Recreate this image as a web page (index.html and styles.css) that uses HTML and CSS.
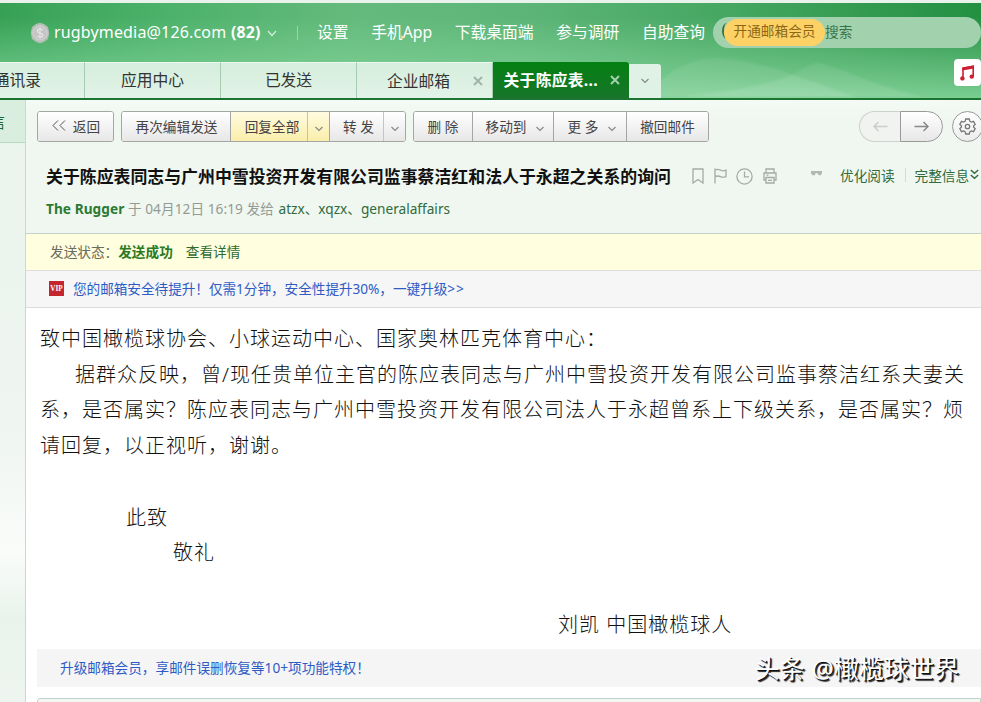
FILE: index.html
```html
<!DOCTYPE html>
<html lang="zh-CN">
<head>
  <meta charset="UTF-8">
  <title>126网易免费邮</title>
  <link rel="stylesheet" href="styles.css">
</head>
<body>

  <header class="header">
    <svg class="hills" width="351" height="48" viewBox="0 0 351 48">
      <defs>
        <linearGradient id="hill" x1="0" y1="0" x2="0" y2="1">
          <stop offset="0" stop-color="#fff" stop-opacity=".08"/>
          <stop offset="1" stop-color="#fff" stop-opacity=".12"/>
        </linearGradient>
      </defs>
      <path d="M0 48 L30 24 Q55 8 75 9 Q100 10 120 16 Q140 20 153 26 L215 48 Z" fill="url(#hill)"/>
      <path d="M40 48 Q120 40 152 26 L170 16 Q177 12 186 16 L205 22 Q225 32 282 48 Z" fill="url(#hill)"/>
    </svg>

    <div class="topbar">
      <svg class="coin" width="20" height="22" viewBox="0 0 20 22">
        <path d="M10 .8 L14 2 L18 5 L19.3 11 L18 17 L14 20 L10 21.2 L6 20 L2 17 L.7 11 L2 5 L6 2 Z" fill="#b3bfb4"/>
        <circle cx="10" cy="11" r="7.2" fill="#c5c5c5" stroke="#d8d6d6"/>
        <path d="M12.8 8.4 Q12 6.8 10 6.8 Q7.4 6.8 7.4 8.8 Q7.4 10.5 10 11 Q12.8 11.5 12.8 13.3 Q12.8 15.2 10 15.2 Q7.8 15.2 7.2 13.6 M10 5.5 V16.5" fill="none" stroke="#e6e3e4" stroke-width="1.2"/>
      </svg>
      <span class="account">rugbymedia@126.com</span>
      <b class="unread">(82)</b>
      <svg class="arrow-down" width="10" height="7" viewBox="0 0 10 7"><path d="M1 1 L5 5.5 L9 1"/></svg>
      <i class="split"></i>
      <nav class="nav">
        <a>设置</a>
        <a>手机App</a>
        <a>下载桌面端</a>
        <a>参与调研</a>
        <a>自助查询</a>
      </nav>
      <div class="search">
        <span class="lens"></span>
        <span class="vip-pill">开通邮箱会员</span>
        <span class="search-text">搜索</span>
      </div>
    </div>

    <div class="tabs">
      <div class="tab tab-first">通讯录</div>
      <div class="tab">应用中心</div>
      <div class="tab">已发送</div>
      <div class="tab tab-close">企业邮箱
        <svg width="10" height="10" viewBox="0 0 10 10"><path d="M1 1 L9 9 M9 1 L1 9"/></svg>
      </div>
      <div class="tab tab-close active">关于陈应表...
        <svg width="10" height="10" viewBox="0 0 10 10"><path d="M1 1 L9 9 M9 1 L1 9"/></svg>
      </div>
      <div class="tab-more">
        <svg class="arrow-down" width="8" height="6" viewBox="0 0 8 6"><path d="M.5 1 L4 4.5 L7.5 1"/></svg>
      </div>
    </div>

    <div class="music">
      <svg width="15" height="16" viewBox="0 0 15 16">
        <path d="M3 13 V3.2 L13.2 1.4 V11.2" fill="none" stroke="#cf1f30" stroke-width="1.6"/>
        <path d="M2.4 2.4 L14 .3 V3.4 L2.4 5.4 Z" fill="#cf1f30"/>
        <circle cx="2.4" cy="13.4" r="2.2" fill="#cf1f30"/>
        <circle cx="11.8" cy="11.6" r="2.2" fill="#cf1f30"/>
      </svg>
    </div>
  </header>

  <div class="main">
    <aside class="sidebar">
      <div class="side-top"><span>信</span></div>
    </aside>

    <section class="content">
      <div class="mail-head">
        <div class="toolbar">
          <div class="group">
            <span class="btn w-back"><svg class="back" width="14" height="11" viewBox="0 0 14 11"><path d="M6 .5 L1 5.5 L6 10.5 M13 .5 L8 5.5 L13 10.5"/></svg>返回</span>
          </div>
          <div class="group">
            <span class="btn w-edit">再次编辑发送</span>
            <span class="btn yellow w-reply">回复全部</span>
            <span class="btn yellow w-drop"><svg class="arrow-down" width="8" height="6" viewBox="0 0 8 6"><path d="M.5 1 L4 4.5 L7.5 1"/></svg></span>
            <span class="btn w-forward">转 发</span>
            <span class="btn w-drop"><svg class="arrow-down" width="8" height="6" viewBox="0 0 8 6"><path d="M.5 1 L4 4.5 L7.5 1"/></svg></span>
          </div>
          <div class="group">
            <span class="btn w-del">删 除</span>
            <span class="btn w-move">移动到<svg class="arrow-down" width="8" height="6" viewBox="0 0 8 6"><path d="M.5 1 L4 4.5 L7.5 1"/></svg></span>
            <span class="btn w-more">更 多<svg class="arrow-down" width="8" height="6" viewBox="0 0 8 6"><path d="M.5 1 L4 4.5 L7.5 1"/></svg></span>
            <span class="btn w-recall">撤回邮件</span>
          </div>
          <div class="pager">
            <span class="prev"><svg width="15" height="11" viewBox="0 0 15 11"><path d="M14.5 5.5 H1 M5.5 1 L1 5.5 L5.5 10"/></svg></span>
            <span class="next"><svg width="15" height="11" viewBox="0 0 15 11"><path d="M.5 5.5 H14 M9.5 1 L14 5.5 L9.5 10"/></svg></span>
          </div>
          <div class="gear">
            <svg width="17" height="17" viewBox="0 0 17 17">
              <path d="M6.7 1 H10.3 L10.8 3.2 L12.3 4.1 L14.5 3.4 L16.2 6.4 L14.6 7.9 V9.1 L16.2 10.6 L14.5 13.6 L12.3 12.9 L10.8 13.8 L10.3 16 H6.7 L6.2 13.8 L4.7 12.9 L2.5 13.6 L.8 10.6 L2.4 9.1 V7.9 L.8 6.4 L2.5 3.4 L4.7 4.1 L6.2 3.2 Z"/>
              <circle cx="8.5" cy="8.5" r="2.2"/>
            </svg>
          </div>
        </div>

        <div class="subject-row">
          <h1 class="subject">关于陈应表同志与广州中雪投资开发有限公司监事蔡洁红和法人于永超之关系的询问</h1>
          <div class="icons">
            <svg width="12" height="16" viewBox="0 0 12 16"><path d="M1 1 H11 V15 L6 11.5 L1 15 Z"/></svg>
            <svg width="13" height="16" viewBox="0 0 13 16"><path d="M1 .5 V15.5 M1 2 Q4 .8 6.5 2.2 Q9 3.4 12 2.2 V8.6 Q9 9.8 6.5 8.6 Q4 7.4 1 8.6"/></svg>
            <svg width="17" height="17" viewBox="0 0 17 17"><circle cx="8.5" cy="8.5" r="7.6"/><path d="M8.5 3.5 V8.8 H13"/></svg>
            <svg width="14" height="16" viewBox="0 0 14 16"><path d="M3 5 V1 H11 V5 M3 12 H1 V5 H13 V12 H11 M3 9.5 H11 V15 H3 Z M5 12.3 H9 M3.5 7.2 H5.5"/></svg>
          </div>
          <svg class="quote" width="11" height="5" viewBox="0 0 11 5"><path d="M0 0 H11 V2.2 L9.8 4.2 H7.8 L6.6 2.2 H4.6 L3.6 4.2 H1.4 L0 2.2 Z"/></svg>
          <a class="opt">优化阅读</a>
          <i class="opt-split"></i>
          <a class="opt">完整信息</a>
          <svg class="double" width="9" height="11" viewBox="0 0 9 11"><path d="M.8 1 L4.5 4.3 L8.2 1 M.8 6 L4.5 9.3 L8.2 6"/></svg>
        </div>

        <div class="sender-row">
          <b>The Rugger</b> <span class="when">于 04月12日 16:19 发给</span> <span class="to">atzx、xqzx、generalaffairs</span>
        </div>
      </div>

      <div class="status">
        <span>发送状态：</span><b>发送成功</b><a>查看详情</a>
      </div>

      <div class="notice">
        <span class="vip">VIP</span><a>您的邮箱安全待提升！仅需1分钟，安全性提升30%，一键升级<span class="more">&gt;&gt;</span></a>
      </div>

      <article class="letter">
        <p>致中国橄榄球协会、小球运动中心、国家奥林匹克体育中心：</p>
        <p class="indent">据群众反映，曾/现任贵单位主官的陈应表同志与广州中雪投资开发有限公司监事蔡洁红系夫妻关</p>
        <p>系，是否属实？陈应表同志与广州中雪投资开发有限公司法人于永超曾系上下级关系，是否属实？烦</p>
        <p>请回复，以正视听，谢谢。</p>
        <p class="wish">此致</p>
        <p class="regards">敬礼</p>
        <p class="sign">刘凯 中国橄榄球人</p>
      </article>

      <div class="promo"><a>升级邮箱会员，享邮件误删恢复等10+项功能特权！</a></div>
      <div class="reply-box"></div>
    </section>
  </div>

  <div class="watermark">头条 @橄榄球世界</div>

</body>
</html>
```
FILE: styles.css
```css
* {
  box-sizing: border-box;
}

body {
  margin: 0;
  width: 981px;
  height: 702px;
  overflow: hidden;
  position: relative;
  background: #fff;
  font-family: "Noto Sans", "Noto Sans CJK SC", sans-serif;
  font-size: 13.65px;
  color: #444;
  white-space: nowrap;
}

svg {
  display: block;
  flex: none;
  fill: none;
  stroke: #999;
}

/* header */
.header {
  position: relative;
  height: 100px;
  border-top: 3px solid #e9f3ec;
  border-bottom: 2px solid #1b7430;
  background:
    linear-gradient(180deg, rgba(130, 210, 150, 0) 15%, rgba(138, 216, 160, .85) 100%),
    linear-gradient(90deg, #36a155 0, #4bb169 16%, #64ba7c 36%, #5cb577 54%, #44a660 75%, #239041 100%);
}

.hills {
  position: absolute;
  left: 640px;
  top: 46px;
  stroke: none;
  filter: blur(1px);
}

.topbar {
  position: relative;
  display: flex;
  align-items: center;
  height: 59px;
  padding-left: 30px;
  color: #fff;
  font-size: 15.75px;
}

.coin {
  stroke: none;
  margin-right: 4px;
}

.account {
  width: 172px;
  margin-top: -2px;
  font-size: 16px;
  letter-spacing: .16px;
}

.unread {
  width: 31px;
  margin: -2px 0 0 5px;
  letter-spacing: .2px;
}

.arrow-down {
  stroke: #888;
  stroke-width: 1.2;
}

.topbar .arrow-down {
  margin-left: 5px;
  margin-top: 2px;
  stroke: #d4eedb;
}

.split {
  width: 1px;
  height: 14px;
  margin-left: 20px;
  background: #9ad6aa;
}

.nav {
  display: flex;
  gap: 22.7px;
  width: 389px;
  margin: -2px 0 0 19px;
}

.search {
  display: flex;
  align-items: center;
  width: 268px;
  height: 31px;
  margin-left: 7px;
  padding-left: 9px;
  border-radius: 16px;
  background: #a2d1ae;
  color: #38744a;
  font-size: 13.65px;
}

.search-text {
  margin-top: -3px;
}

.lens {
  width: 10px;
  height: 16px;
  margin: -3px -8px 0 0;
  border-left: 2px solid #367246;
  border-radius: 50%;
}

.vip-pill {
  width: 101px;
  height: 27px;
  border-radius: 14px;
  background: #fcd266;
  color: #8d6714;
  line-height: 24px;
  text-align: center;
}

.tabs {
  position: relative;
  display: flex;
  align-items: flex-end;
  height: 36px;
  font-size: 15.75px;
  color: #333;
}

.tab {
  width: 136px;
  height: 36px;
  border-right: 1px solid #a5ccb0;
  border-top: 1px solid #eef8f1;
  background: linear-gradient(#d5eedd, #e2f3e7);
  line-height: 34px;
  text-align: center;
}

/* partly scrolled out on the left */
.tab-first {
  display: flex;
  justify-content: flex-end;
  width: 85px;
  padding-right: 43px;
}

.tab-close {
  display: flex;
  align-items: center;
  justify-content: flex-end;
  gap: 23px;
  padding-right: 9px;
}

.tab-close svg {
  stroke: #a3b3a8;
  stroke-width: 2;
}

.tab-close.active {
  gap: 12px;
  border: 0;
  border-radius: 0 3px 0 0;
  background: linear-gradient(#048012, #18752a);
  color: #fff;
  font-weight: bold;
  letter-spacing: .3px;
}

.active svg {
  stroke: #a5d0ab;
}

.tab-more {
  display: flex;
  align-items: center;
  justify-content: center;
  width: 32px;
  height: 34px;
  border-radius: 0 3px 0 0;
  background: #e0f2e6;
}

.music {
  position: absolute;
  left: 954px;
  top: 56px;
  display: flex;
  align-items: center;
  justify-content: center;
  width: 27px;
  height: 27px;
  border-radius: 4px;
  background: #fff;
}

.music svg {
  stroke: none;
}

/* layout */
.main {
  display: flex;
  height: 602px;
}

.sidebar {
  width: 26px;
  border-right: 1px solid #ccd8cf;
  background: linear-gradient(#e9f4ec 0, #eff5f1 55%, #fafcfa 75%, #e9f3ec 86%, #eef5f0 100%);
}

.side-top {
  display: flex;
  justify-content: flex-end;
  align-items: center;
  height: 43px;
  padding-right: 20px;
  border-bottom: 1px solid #b8d8c2;
  background: #daeee0;
  color: #1f6b32;
  font-size: 15.7px;
}

.content {
  width: 955px;
}

.mail-head {
  height: 134px;
  padding-top: 11px;
  border-bottom: 1px solid #c5d2c8;
  background: linear-gradient(#f4faf5, #eff7f0 20px);
}

/* toolbar */
.toolbar {
  display: flex;
  height: 31px;
  padding-left: 11px;
}

.group {
  display: flex;
  flex: none;
  margin-right: 7px;
  border: 1px solid #a3a6a3;
  border-radius: 3px;
  overflow: hidden;
}

.btn {
  display: flex;
  align-items: center;
  justify-content: center;
  height: 29px;
  padding-bottom: 2px;
  border-right: 1px solid #a3a6a3;
  background: linear-gradient(#fff, #e8e7e8);
}

.btn:last-child {
  border-right: 0;
}

.btn .arrow-down {
  margin-top: 6px;
}

.yellow {
  background: linear-gradient(#fffbe0, #fbeeaa);
}

.back {
  margin-right: 7px;
  stroke: #555;
}

.w-back { width: 75px; padding-left: 1px; }
.w-edit { width: 109px; padding-left: 1px; }
.w-reply { width: 77px; padding-left: 6px; border-color: #cfc38b; }
.w-drop { width: 22px; }
.w-forward { width: 54px; padding-left: 4px; border-color: #c4c4c4; }
.w-del { width: 59px; }
.w-move { width: 81px; padding-left: 4px; }
.w-more { width: 73px; padding-left: 4px; }
.w-recall { width: 81px; }
.w-move svg, .w-more svg { margin-left: 10px; }

.w-drop:last-child {
  width: 21px;
}

.pager {
  display: flex;
  flex: none;
  margin-left: 143px;
}

.pager span {
  display: flex;
  align-items: center;
  justify-content: center;
  width: 43px;
  border: 1px solid #999;
}

.pager .prev {
  width: 41px;
  border-color: #cdd1ce;
  border-right: 0;
  border-radius: 16px 0 0 16px;
  background: #f0f3f0;
}

.pager .next {
  border-radius: 0 16px 16px 0;
  background: linear-gradient(#fff, #e8e7e8);
}

.pager svg {
  stroke: #888;
  stroke-width: 1.5;
}

.pager .prev svg {
  stroke: #ccc;
}

.gear {
  display: flex;
  flex: none;
  align-items: center;
  justify-content: center;
  width: 31px;
  height: 31px;
  margin-left: 9px;
  border: 1px solid #999;
  border-radius: 50%;
  background: linear-gradient(#fff, #ececec);
}

.gear svg {
  stroke: #777;
  stroke-width: 1.3;
}

/* subject */
.subject-row {
  display: flex;
  align-items: center;
  height: 32px;
  margin-top: 18px;
  padding-left: 20px;
}

.subject {
  width: 645px;
  margin: 0;
  padding-top: 2px;
  font-size: 16.9px;
  line-height: 28px;
  color: #111;
}

.icons {
  display: flex;
  align-items: center;
  gap: 9.5px;
  width: 85px;
  padding-left: 1px;
}

.icons svg {
  stroke: #a5aaa6;
  stroke-width: 1.3;
}

.quote {
  width: 11px;
  margin: -6px 18px 0 35px;
  fill: #b1b7b2;
  stroke: none;
}

.opt {
  margin-top: -3px;
  color: #2f6b3c;
}

.opt-split {
  width: 1px;
  height: 14px;
  margin: -3px 9px 0 10px;
  background: #d2dcd4;
}

.double {
  margin: -3px 0 0 1px;
  stroke: #2f6b3c;
  stroke-width: 1.4;
}

.sender-row {
  padding: 6px 0 0 20px;
  line-height: 21px;
  letter-spacing: .06px;
}

.sender-row b {
  color: #2b7a32;
}

.when {
  margin-right: 1px;
  color: #949a95;
}

.to {
  color: #2f6b3c;
  letter-spacing: 0;
}

/* bars under the head */
.status {
  display: flex;
  align-items: center;
  height: 37px;
  padding: 0 0 2px 24px;
  border-bottom: 1px solid #dedede;
  background: #ffffdf;
  color: #6b6b5e;
}

.status b {
  color: #2b7a1f;
}

.status a {
  margin-left: 13px;
  color: #2f6b2f;
}

.notice {
  display: flex;
  align-items: center;
  height: 37px;
  padding: 0 0 2px 23px;
  border-bottom: 1px solid #dcdcdc;
  background: #f6f6f7;
}

.notice a, .promo a {
  color: #2f5bc4;
}

.notice a {
  letter-spacing: -.05px;
}

.notice .more {
  letter-spacing: 1px;
}

.vip {
  width: 15px;
  height: 15px;
  margin-right: 9px;
  background: #c4262e;
  color: #fff;
  font: bold 7.2px/16px "Liberation Serif", serif;
  text-align: center;
}

/* letter */
.letter {
  height: 341px;
  padding: 13px 0 0 14px;
  font-weight: 300;
  font-size: 20px;
  letter-spacing: 1px;
  line-height: 35.7px;
  color: #111;
}

.letter p {
  margin: 0;
}

.letter .indent {
  padding-left: 35px;
}

.letter .wish {
  margin-top: 35.7px;
  padding-left: 86px;
}

.letter .regards {
  padding-left: 133px;
}

.letter .sign {
  margin-top: 35.7px;
  padding-left: 518px;
}

.promo {
  display: flex;
  align-items: center;
  height: 38px;
  margin-left: 11px;
  padding: 0 0 2px 23px;
  background: #f5f5f6;
}

.reply-box {
  height: 10px;
  margin: 11px 0 0 11px;
  border: 1px solid #c5d2c8;
  border-radius: 3px 0 0 0;
  background: #f3f7f3;
}

.watermark {
  position: absolute;
  left: 755px;
  top: 650px;
  font-size: 24.7px;
  line-height: 38px;
  letter-spacing: .3px;
  color: #fff;
  text-shadow: 1px 1px 0 #111, 2px 2px 1px #222;
}
```
